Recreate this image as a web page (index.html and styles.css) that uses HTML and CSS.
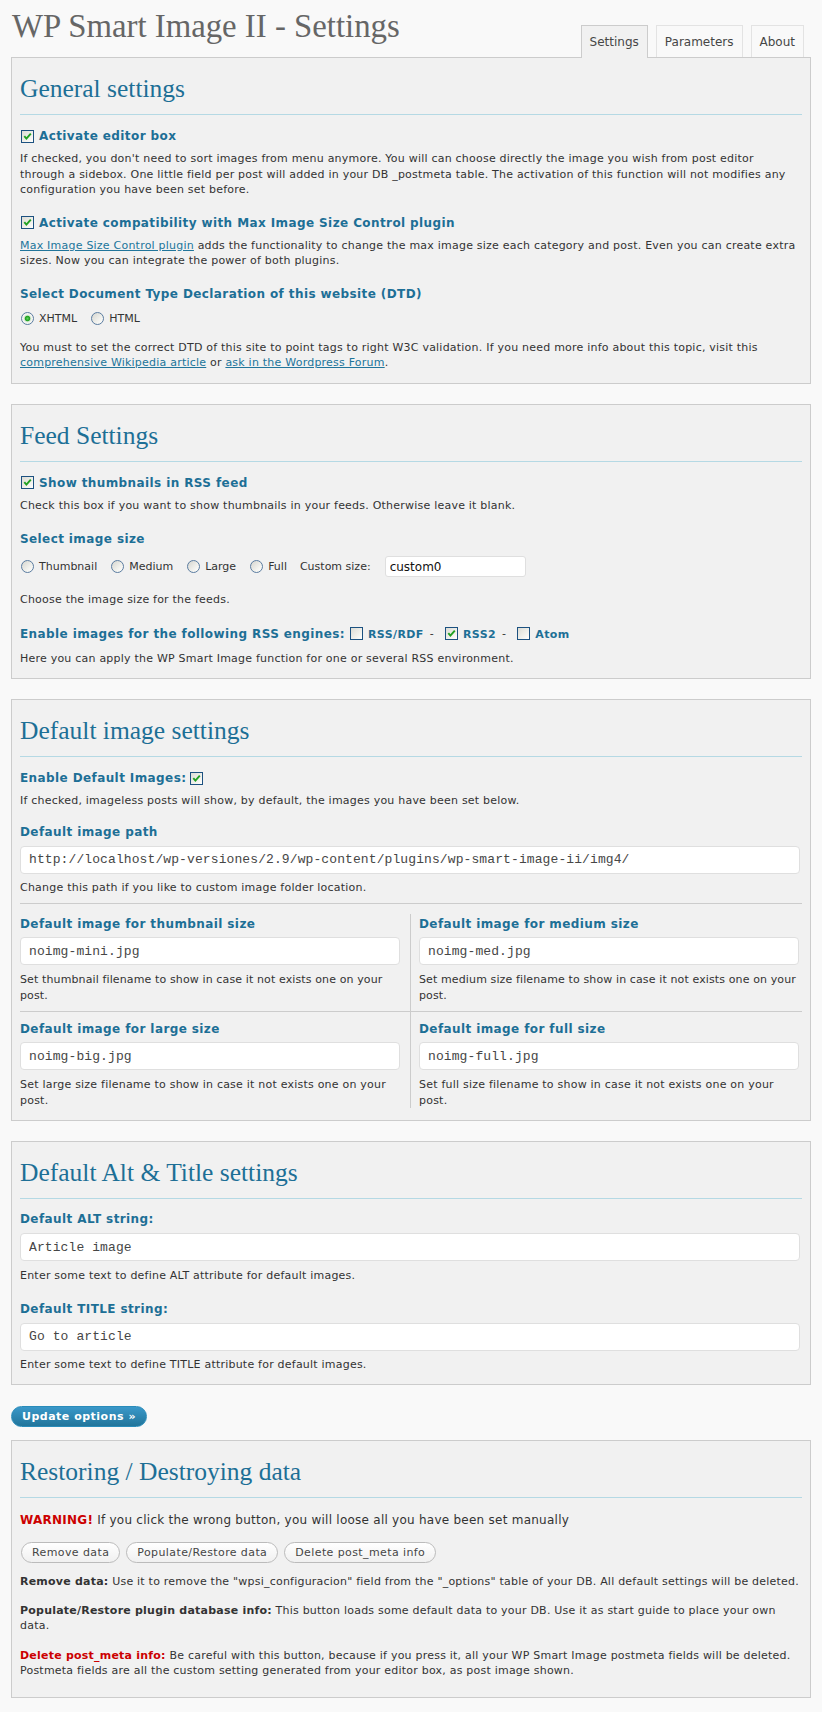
FILE: index.html
```html
<!DOCTYPE html>
<html lang="en">
<head>
<meta charset="utf-8">
<title>WP Smart Image II - Settings</title>
<link rel="stylesheet" href="styles.css">
</head>
<body>
<div class="wrap">
  <div class="header">
    <h2 class="page-title">WP Smart Image II - Settings</h2>
    <ul class="tabs">
      <li class="tab active">Settings</li>
      <li class="tab">Parameters</li>
      <li class="tab">About</li>
    </ul>
  </div>

  <div class="panel p-general">
    <h3 class="panel-title">General settings</h3>
    <div class="check-label mt13"><span class="cb on"><svg viewBox="0 0 11 11" width="11" height="11"><path d="M2.3 5.2 L4.4 7.6 L8.8 2.6" fill="none" stroke="#21a121" stroke-width="1.9"/></svg></span>Activate editor box</div>
    <p class="desc mt7">If checked, you don't need to sort images from menu anymore. You will can choose directly the image you wish from post editor through a sidebox. One little field per post will added in your DB _postmeta table. The activation of this function will not modifies any configuration you have been set before.</p>
    <div class="check-label mt17"><span class="cb on"><svg viewBox="0 0 11 11" width="11" height="11"><path d="M2.3 5.2 L4.4 7.6 L8.8 2.6" fill="none" stroke="#21a121" stroke-width="1.9"/></svg></span>Activate compatibility with Max Image Size Control plugin</div>
    <p class="desc mt7"><a href="#">Max Image Size Control plugin</a> adds the functionality to change the max image size each category and post. Even you can create extra sizes. Now you can integrate the power of both plugins.</p>
    <h4 class="label mt17">Select Document Type Declaration of this website (DTD)</h4>
    <div class="radio-row mt9">
      <span class="opt"><span class="rd on"></span>XHTML</span>
      <span class="opt"><span class="rd"></span>HTML</span>
    </div>
    <p class="desc mt13">You must to set the correct DTD of this site to point tags to right W3C validation. If you need more info about this topic, visit this <a href="#">comprehensive Wikipedia article</a> or <a href="#">ask in the Wordpress Forum</a>.</p>
  </div>

  <div class="panel p-feed">
    <h3 class="panel-title">Feed Settings</h3>
    <div class="check-label mt13"><span class="cb on"><svg viewBox="0 0 11 11" width="11" height="11"><path d="M2.3 5.2 L4.4 7.6 L8.8 2.6" fill="none" stroke="#21a121" stroke-width="1.9"/></svg></span>Show thumbnails in RSS feed</div>
    <p class="desc mt7">Check this box if you want to show thumbnails in your feeds. Otherwise leave it blank.</p>
    <h4 class="label mt18">Select image size</h4>
    <div class="radio-row sizes mt9">
      <span class="opt"><span class="rd"></span>Thumbnail</span>
      <span class="opt"><span class="rd"></span>Medium</span>
      <span class="opt"><span class="rd"></span>Large</span>
      <span class="opt"><span class="rd"></span>Full</span>
      <span class="opt-text">Custom size:</span>
      <input class="custom" type="text" value="custom0">
    </div>
    <p class="desc mt15">Choose the image size for the feeds.</p>
    <div class="engines mt17">
      <h4 class="label">Enable images for the following RSS engines:</h4>
      <span class="cb"></span><span class="eng">RSS/RDF</span><span class="sep">-</span>
      <span class="cb on"><svg viewBox="0 0 11 11" width="11" height="11"><path d="M2.3 5.2 L4.4 7.6 L8.8 2.6" fill="none" stroke="#21a121" stroke-width="1.9"/></svg></span><span class="eng">RSS2</span><span class="sep">-</span>
      <span class="cb"></span><span class="eng">Atom</span>
    </div>
    <p class="desc mt8">Here you can apply the WP Smart Image function for one or several RSS environment.</p>
  </div>

  <div class="panel p-default">
    <h3 class="panel-title">Default image settings</h3>
    <div class="label-inline mt13"><h4 class="label">Enable Default Images:</h4><span class="cb on"><svg viewBox="0 0 11 11" width="11" height="11"><path d="M2.3 5.2 L4.4 7.6 L8.8 2.6" fill="none" stroke="#21a121" stroke-width="1.9"/></svg></span></div>
    <p class="desc mt7">If checked, imageless posts will show, by default, the images you have been set below.</p>
    <h4 class="label mt15">Default image path</h4>
    <input class="text full mt6" type="text" value="http://localhost/wp-versiones/2.9/wp-content/plugins/wp-smart-image-ii/img4/">
    <p class="desc mt6">Change this path if you like to custom image folder location.</p>
    <div class="size-grid">
      <div class="cell c-left r1">
        <h4 class="label">Default image for thumbnail size</h4>
        <input class="text mt5" type="text" value="noimg-mini.jpg">
        <p class="desc cell-desc mt7">Set thumbnail filename to show in case it not exists one on your post.</p>
      </div>
      <div class="cell c-right r1">
        <h4 class="label">Default image for medium size</h4>
        <input class="text mt5" type="text" value="noimg-med.jpg">
        <p class="desc cell-desc mt7">Set medium size filename to show in case it not exists one on your post.</p>
      </div>
      <div class="cell c-left r2">
        <h4 class="label">Default image for large size</h4>
        <input class="text mt5" type="text" value="noimg-big.jpg">
        <p class="desc mt7">Set large size filename to show in case it not exists one on your post.</p>
      </div>
      <div class="cell c-right r2">
        <h4 class="label">Default image for full size</h4>
        <input class="text mt5" type="text" value="noimg-full.jpg">
        <p class="desc mt7">Set full size filename to show in case it not exists one on your post.</p>
      </div>
    </div>
  </div>

  <div class="panel p-alt">
    <h3 class="panel-title">Default Alt &amp; Title settings</h3>
    <h4 class="label mt12">Default ALT string:</h4>
    <input class="text full mt6" type="text" value="Article image">
    <p class="desc mt7">Enter some text to define ALT attribute for default images.</p>
    <h4 class="label mt17">Default TITLE string:</h4>
    <input class="text full mt6" type="text" value="Go to article">
    <p class="desc mt6">Enter some text to define TITLE attribute for default images.</p>
  </div>

  <div class="actions">
    <button class="button-primary" type="button">Update options &raquo;</button>
  </div>

  <div class="panel p-restore">
    <h3 class="panel-title">Restoring / Destroying data</h3>
    <p class="warning mt14"><strong class="red">WARNING!</strong> If you click the wrong button, you will loose all you have been set manually</p>
    <div class="buttons mt14">
      <button class="button" type="button">Remove data</button>
      <button class="button" type="button">Populate/Restore data</button>
      <button class="button" type="button">Delete post_meta info</button>
    </div>
    <p class="desc mt11"><strong>Remove data:</strong> Use it to remove the "wpsi_configuracion" field from the "_options" table of your DB. All default settings will be deleted.</p>
    <p class="desc mt13"><strong>Populate/Restore plugin database info:</strong> This button loads some default data to your DB. Use it as start guide to place your own data.</p>
    <p class="desc mt14"><strong class="red">Delete post_meta info:</strong> Be careful with this button, because if you press it, all your WP Smart Image postmeta fields will be deleted. Postmeta fields are all the custom setting generated from your editor box, as post image shown.</p>
  </div>
</div>
</body>
</html>
```

FILE: styles.css
```css
* { box-sizing: border-box; }

body {
  margin: 0;
  background: #f9f9f9;
  font-family: "DejaVu Sans", Verdana, sans-serif;
  font-size: 11px;
  letter-spacing: 0.22px;
  color: #333;
}

.wrap { padding: 0 11px 11px; }

/* header + tabs */
.header {
  display: flex;
  justify-content: space-between;
  align-items: flex-end;
  height: 57px;
}
.page-title {
  align-self: flex-start;
  margin: 6px 0 0 1px;
  font: normal 32.8px/40px "Liberation Serif", "Times New Roman", serif;
  letter-spacing: 0;
  color: #666;
}
.tabs {
  list-style: none;
  margin: 0 7px -1px 0;
  padding: 0;
  display: flex;
  align-items: flex-end;
  gap: 8px;
  position: relative;
  z-index: 1;
}
.tab {
  height: 32px;
  margin-bottom: 1px;
  padding: 8px 8px 0;
  line-height: 16px;
  font-size: 12px;
  letter-spacing: 0;
  color: #464646;
  background: #f9f9f9;
  border: 1px solid #e3e3e3;
  border-bottom: 0;
}
.tab.active {
  height: 33px;
  margin-bottom: 0;
  background: #f1f1f1;
  border-color: #ccc;
}

/* panels */
.panel {
  background: #f1f1f1;
  border: 1px solid #ccc;
  padding: 0 8px 12px;
  margin-bottom: 20px;
}
.panel-title {
  margin: 0;
  padding: 16px 0 10px;
  border-bottom: 1px solid #b5d9e4;
  font: normal 25.5px/30px "Liberation Serif", "Times New Roman", serif;
  letter-spacing: 0;
  color: #1d6f96;
}

.label {
  margin: 0;
  font-size: 12px;
  font-weight: bold;
  line-height: 16px;
  letter-spacing: 0.4px;
  color: #1d6f96;
}
.check-label {
  display: flex;
  align-items: center;
  font-size: 12px;
  font-weight: bold;
  line-height: 16px;
  letter-spacing: 0.4px;
  color: #1d6f96;
}
.desc {
  margin: 0;
  line-height: 15.5px;
}
.desc a { color: #21759b; }
.cell-desc { letter-spacing: 0.12px; }

/* checkbox + radio */
.cb {
  flex: none;
  display: inline-flex;
  width: 13px;
  height: 13px;
  margin: 0 5px 0 1px;
  border: 1px solid #1c5180;
  background: linear-gradient(135deg, #dcdcd5 0%, #f4f4f0 70%, #fff 100%);
}
.cb svg { display: block; }
.rd {
  flex: none;
  display: inline-block;
  width: 13px;
  height: 13px;
  margin: 0 5px 0 1px;
  border: 1px solid #5a7ca0;
  border-radius: 50%;
  background: linear-gradient(135deg, #d5d5cf 0%, #f3f3ef 65%, #fff 100%);
}
.rd.on {
  background: radial-gradient(circle at 50% 50%, #5fd45f 0, #21a121 2.2px, #cfe8cf 3.2px, #f3f3ef 4.2px, #fff 100%);
}

.radio-row {
  display: flex;
  align-items: center;
  line-height: 16px;
  letter-spacing: 0;
}
.opt {
  display: flex;
  align-items: center;
  margin-right: 13px;
}
.sizes { height: 21px; }
.opt-text { margin-right: 14px; }

input.custom {
  width: 141px;
  height: 21px;
  margin: 0;
  padding: 0 4px;
  border: 1px solid #dfdfdf;
  border-radius: 3px;
  background: #fff;
  font: 12px "DejaVu Sans", Verdana, sans-serif;
  letter-spacing: 0;
  color: #111;
}

.engines {
  display: flex;
  align-items: center;
  line-height: 16px;
}
.engines .cb { margin: 0 5px 0 5px; }
.eng {
  font-weight: bold;
  letter-spacing: 0.4px;
  color: #1d6f96;
  padding-top: 2px;
}
.sep { margin: 0 6px; color: #333; }

.label-inline {
  display: flex;
  align-items: center;
}
.label-inline .cb { margin-left: 4px; }

input.text {
  display: block;
  width: 380px;
  height: 28px;
  padding: 0 8px;
  border: 1px solid #dfdfdf;
  border-radius: 4px;
  background: #fff;
  font: 13px "Liberation Mono", "Courier New", monospace;
  letter-spacing: 0.1px;
  color: #464646;
}
input.text.full { width: calc(100% - 2px); }

/* 2x2 grid of default images */
.size-grid {
  display: grid;
  grid-template-columns: 390px 1fr;
  margin-top: 8px;
  padding-top: 10px;
  border-top: 1px solid #ccc;
}
.cell.c-left { padding-right: 10px; }
.cell.c-right { padding-left: 8px; border-left: 1px solid #ccc; }
.cell.r1 { padding-top: 2px; padding-bottom: 8px; }
.cell.r2 { padding-top: 9px; border-top: 1px solid #ccc; }

/* buttons */
.actions { margin: 21px 0 13px; }
.button-primary {
  display: block;
  height: 21px;
  padding: 0 10px;
  border: 1px solid #298cba;
  border-radius: 11px;
  background: linear-gradient(#3a98c9, #21759b);
  font: bold 11px/19px "DejaVu Sans", Verdana, sans-serif;
  letter-spacing: 0.5px;
  color: #fff;
}

.p-restore { padding-bottom: 18px; }
.warning {
  margin: 0;
  font-size: 12px;
  line-height: 16px;
  letter-spacing: 0.25px;
}
.red { color: #c00; }
.buttons {
  display: flex;
  gap: 6px;
  padding-left: 1px;
}
.button {
  height: 21px;
  padding: 0 10px;
  border: 1px solid #bbb;
  border-radius: 11px;
  background: linear-gradient(#fff, #f0f0f0);
  font: 11px/19px "DejaVu Sans", Verdana, sans-serif;
  letter-spacing: 0.4px;
  color: #464646;
}

/* spacing utilities (last so they win) */
.mt5 { margin-top: 5px; }
.mt6 { margin-top: 6px; }
.mt7 { margin-top: 7px; }
.mt8 { margin-top: 8px; }
.mt9 { margin-top: 9px; }
.mt11 { margin-top: 11px; }
.mt12 { margin-top: 12px; }
.mt13 { margin-top: 13px; }
.mt14 { margin-top: 14px; }
.mt15 { margin-top: 15px; }
.mt17 { margin-top: 17px; }
.mt18 { margin-top: 18px; }
```
